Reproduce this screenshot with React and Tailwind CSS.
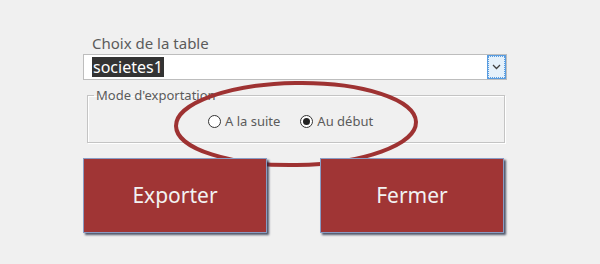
import React, { useState } from 'react';

const App = () => {
    const [mode, setMode] = useState('debut');

    return (
        <div className="relative w-[600px] h-[264px] bg-[#f0f0f0] overflow-hidden" style={{ fontFamily: '"Noto Sans", "Open Sans", sans-serif' }}>
            <div className="ml-[83px] w-[424px] pt-[33px] flex flex-col">
                <label className="ml-[9px] text-[15px] leading-[20px] text-[#5b5b5b]">Choix de la table</label>

                <div className="mt-[1px] h-[26px] flex items-stretch bg-white border border-[#bdbdbd]">
                    <div className="flex-1 flex items-center pl-[8px]">
                        <span className="bg-[#333333] text-white text-[16px] leading-[20px] px-[1px]">societes1</span>
                    </div>
                    <div className="w-[19px] flex items-center justify-center bg-[#e5f1fb] border border-[#5a9de0] outline outline-1 outline-dotted outline-[#5a9de0] -outline-offset-2">
                        <svg width="9" height="6" viewBox="0 0 9 6">
                            <path d="M1 1 L4.5 4.5 L8 1" fill="none" stroke="#404040" strokeWidth="1.3" />
                        </svg>
                    </div>
                </div>

                <fieldset className="mt-[8px] ml-[4px] w-[418px] h-[55px] border border-[#c4c4c4] shadow-[inset_1px_1px_0_#ffffff,1px_1px_0_#ffffff] px-[6px]">
                    <legend className="px-[2px] text-[13px] leading-[14px] text-[#5b5b5b]">Mode d'exportation</legend>
                    <div className="flex items-center gap-[20px] pl-[114px] pt-[10px]">
                        <label className="flex items-center gap-[4px] text-[13px] text-[#5b5b5b] cursor-pointer" onClick={() => setMode('suite')}>
                            <span className="w-[13px] h-[13px] rounded-full border border-[#333] bg-white flex items-center justify-center">
                                {mode === 'suite' && <span className="w-[7px] h-[7px] rounded-full bg-[#222]" />}
                            </span>
                            A la suite
                        </label>
                        <label className="flex items-center gap-[4px] text-[13px] text-[#5b5b5b] cursor-pointer" onClick={() => setMode('debut')}>
                            <span className="w-[13px] h-[13px] rounded-full border border-[#333] bg-white flex items-center justify-center">
                                {mode === 'debut' && <span className="w-[7px] h-[7px] rounded-full bg-[#222]" />}
                            </span>
                            Au début
                        </label>
                    </div>
                </fieldset>

                <div className="relative z-10 mt-[15px] flex justify-between">
                    <button className="w-[184px] h-[75px] bg-[#a03535] border border-[#8a9cc4] shadow-[2px_2px_2px_rgba(25,35,60,0.75)] text-[#f2f2f2] text-[21px]">
                        Exporter
                    </button>
                    <button className="w-[184px] h-[75px] bg-[#a03535] border border-[#8a9cc4] shadow-[2px_2px_2px_rgba(25,35,60,0.75)] text-[#f2f2f2] text-[21px] mr-[3px]">
                        Fermer
                    </button>
                </div>
            </div>

            {/* annotation ellipse */}
            <svg className="absolute left-0 top-0 pointer-events-none" width="600" height="264">
                <ellipse cx="296" cy="124" rx="120" ry="41" fill="none" stroke="#9e3232" strokeWidth="4" transform="rotate(-1 296 124)" />
            </svg>
        </div>
    );
};

export default App;
